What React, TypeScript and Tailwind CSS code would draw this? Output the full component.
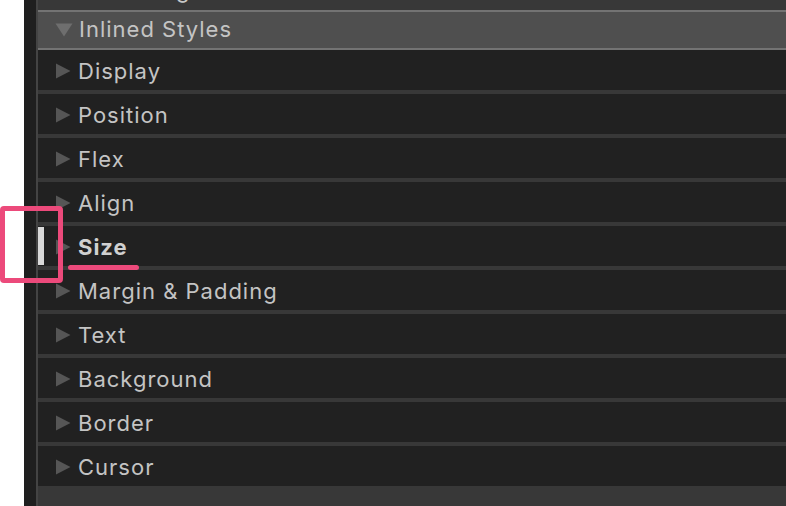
import React from "react";

const rows = [
  "Display",
  "Position",
  "Flex",
  "Align",
  "Size",
  "Margin & Padding",
  "Text",
  "Background",
  "Border",
  "Cursor",
];

function RightTri() {
  return (
    <svg width="15" height="16" viewBox="0 0 15 16" className="shrink-0">
      <polygon points="0,0.5 14.5,8 0,15.5" fill="#565656" />
    </svg>
  );
}

function DownTri() {
  return (
    <svg width="18" height="14" viewBox="0 0 18 14" className="shrink-0">
      <polygon points="0.5,0.5 17.5,0.5 9,13.5" fill="#6e6e6e" />
    </svg>
  );
}

export default function App() {
  return (
    <div
      className="relative w-[786px] h-[506px] overflow-hidden bg-white flex"
      style={{ fontFamily: "Inter, 'Noto Sans', sans-serif" }}
    >
      <div className="w-[24px] shrink-0 bg-white" />
      <div className="w-[12px] shrink-0 bg-[#1f1f1f]" />
      <div className="w-[2px] shrink-0 bg-[#444444]" />
      <div className="flex-1 flex flex-col bg-[#383838]">
        <div className="h-[10px] overflow-hidden">
          <div className="h-[40px] -mt-[30px] flex items-center pl-[48px] text-[22px] tracking-[1px] text-[#c8c8c8]">
            Matching
          </div>
        </div>
        <div className="h-[2px] bg-[#737373]" />
        <div className="h-[36px] bg-[#4f4f4f] flex items-center pl-[17px] gap-[6px] text-[22px] tracking-[1px] text-[#c4c4c4]">
          <DownTri />
          <span className="-mt-[1px]">Inlined Styles</span>
        </div>
        <div className="h-[2px] bg-[#737373]" />
        {rows.map((r) => (
          <div key={r} className="h-[40px] mb-[4px] bg-[#212121] flex items-center">
            <div className={r === "Size" ? "w-[6px] h-[38px] bg-[#d9d9d9]" : "w-[6px]"} />
            <div className="pl-[12px] pt-[2px] flex items-center gap-[7px]">
              <RightTri />
              <span
                className={
                  r === "Size"
                    ? "text-[22px] tracking-[1px] font-bold text-[#d0d0d0]"
                    : "text-[22px] tracking-[1px] text-[#c4c4c4]"
                }
              >
                {r}
              </span>
            </div>
          </div>
        ))}
      </div>
      <div className="absolute left-[0px] top-[206px] w-[63px] h-[77px] border-[5px] border-[#ec4a7b] rounded-[4px]" />
      <div className="absolute left-[68px] top-[265px] w-[71px] h-[5px] rounded-full bg-[#ec4a7b]" />
    </div>
  );
}
